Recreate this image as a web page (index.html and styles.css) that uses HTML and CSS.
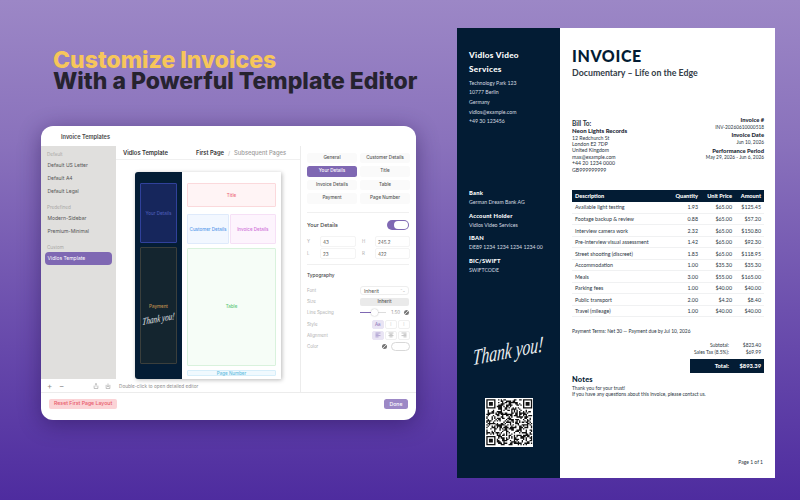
FILE: index.html
```html
<!DOCTYPE html>
<html>
<head>
    <meta charset="UTF-8">
    <meta name="viewport" content="width=device-width, initial-scale=1.0">
    <title>Customize Invoices</title>
    <link rel="stylesheet" href="styles.css">
</head>
<body>
    <div class="stage">
        <div class="promo">
            <h1 class="headline">
                <span class="headline-accent">Customize Invoices</span>
                <span class="headline-dark">With a Powerful Template Editor</span>
            </h1>

            <div class="window">
                <div class="titlebar">Invoice Templates</div>
                <div class="window-body">
                    <div class="sidebar-col">
                        <div class="sidebar">
                            <div class="side-group">Default</div>
                            <div class="side-item">Default US Letter</div>
                            <div class="side-item">Default A4</div>
                            <div class="side-item">Default Legal</div>
                            <div class="side-group">Predefined</div>
                            <div class="side-item">Modern-Sidebar</div>
                            <div class="side-item">Premium-Minimal</div>
                            <div class="side-group">Custom</div>
                            <div class="side-item selected">Vidlos Template</div>
                        </div>
                        <div class="side-tools">
                            <span class="tool-glyph">+</span>
                            <span class="tool-glyph">−</span>
                            <span class="tool-spacer"></span>
                            <svg class="tool-icon" viewBox="0 0 8 8"><path d="M1.5 3.5v3.8h5V3.5M4 5V.8M2.6 2 4 .7 5.4 2" fill="none" stroke="#8b8b8b" stroke-width=".7"/></svg>
                            <svg class="tool-icon" viewBox="0 0 8 8"><path d="M1.5 2.5v4.8h5V2.5M4 .7v4.2M2.6 3.7 4 5l1.4-1.3" fill="none" stroke="#8b8b8b" stroke-width=".7"/></svg>
                        </div>
                    </div>

                    <div class="center">
                        <div class="center-head">
                            <span class="template-name">Vidlos Template</span>
                            <span class="page-tab">First Page</span>
                            <span class="tab-sep">/</span>
                            <span class="page-tab muted">Subsequent Pages</span>
                        </div>
                        <div class="canvas">
                            <div class="mini-page">
                                <div class="mini-side">
                                    <div class="zone zone-your">Your Details</div>
                                    <div class="zone zone-payment">
                                        <span class="payment-label">Payment</span>
                                        <span class="mini-thanks">Thank you!</span>
                                    </div>
                                </div>
                                <div class="mini-main">
                                    <div class="zone zone-title">Title</div>
                                    <div class="zone-pair">
                                        <div class="zone zone-customer">Customer Details</div>
                                        <div class="zone zone-invoice">Invoice Details</div>
                                    </div>
                                    <div class="zone zone-table">Table</div>
                                    <div class="zone zone-number">Page Number</div>
                                </div>
                            </div>
                        </div>
                        <div class="hint">Double-click to open detailed editor</div>
                    </div>

                    <div class="panel">
                        <div class="section-grid">
                            <div class="sec-btn">General</div>
                            <div class="sec-btn">Customer Details</div>
                            <div class="sec-btn active">Your Details</div>
                            <div class="sec-btn">Title</div>
                            <div class="sec-btn">Invoice Details</div>
                            <div class="sec-btn">Table</div>
                            <div class="sec-btn">Payment</div>
                            <div class="sec-btn">Page Number</div>
                        </div>
                        <div class="panel-block">
                            <div class="details-head">
                                <span>Your Details</span>
                                <span class="toggle"><span class="toggle-knob"></span></span>
                            </div>
                            <div class="coords">
                                <span class="prop">Y</span><span class="coord">43</span>
                                <span class="prop">H</span><span class="coord">245.2</span>
                                <span class="prop">L</span><span class="coord">23</span>
                                <span class="prop">R</span><span class="coord">422</span>
                            </div>
                        </div>
                        <div class="panel-block typo">
                            <div class="typo-title">Typography</div>
                            <div class="typo-row">
                                <span class="prop">Font</span>
                                <span class="select">Inherit<span class="select-arrows">⌃⌄</span></span>
                            </div>
                            <div class="typo-row">
                                <span class="prop">Size</span>
                                <span class="size-box">Inherit</span>
                            </div>
                            <div class="typo-row">
                                <span class="prop">Line Spacing</span>
                                <span class="slider"><span class="slider-fill"></span><span class="slider-knob"></span></span>
                                <span class="spacing-val">1.50</span>
                                <span class="no-sign"></span>
                            </div>
                            <div class="typo-row">
                                <span class="prop">Style</span>
                                <span class="seg-group">
                                    <span class="seg on">Aa</span>
                                    <span class="seg faint">I</span>
                                    <span class="seg faint">I</span>
                                </span>
                            </div>
                            <div class="typo-row">
                                <span class="prop">Alignment</span>
                                <span class="seg-group">
                                    <span class="seg on"><svg viewBox="0 0 6 6"><path d="M.5 1h5M.5 2.3h3M.5 3.6h5M.5 4.9h3" stroke="#8d7bbd" stroke-width=".6"/></svg></span>
                                    <span class="seg"><svg viewBox="0 0 6 6"><path d="M.5 1h5M1.5 2.3h3M.5 3.6h5M1.5 4.9h3" stroke="#9a9a9a" stroke-width=".6"/></svg></span>
                                    <span class="seg"><svg viewBox="0 0 6 6"><path d="M.5 1h5M2.5 2.3h3M.5 3.6h5M2.5 4.9h3" stroke="#9a9a9a" stroke-width=".6"/></svg></span>
                                </span>
                            </div>
                            <div class="typo-row">
                                <span class="prop">Color</span>
                                <span class="color-wrap"><span class="no-sign"></span><span class="color-pill"></span></span>
                            </div>
                        </div>
                    </div>
                </div>
                <div class="window-foot">
                    <span class="btn-reset">Reset First Page Layout</span>
                    <span class="btn-done">Done</span>
                </div>
            </div>
        </div>

        <div class="invoice">
            <div class="inv-side">
                <div class="company">Vidlos Video Services</div>
                <div class="address">
                    <div>Technology Park 123</div>
                    <div>10777 Berlin</div>
                    <div>Germany</div>
                    <div>vidlos@example.com</div>
                    <div>+49 30 123456</div>
                </div>
                <div class="bank">
                    <div class="bank-label">Bank</div>
                    <div class="bank-val">German Dream Bank AG</div>
                    <div class="bank-label">Account Holder</div>
                    <div class="bank-val">Vidlos Video Services</div>
                    <div class="bank-label">IBAN</div>
                    <div class="bank-val">DE89 1234 1234 1234 1234 00</div>
                    <div class="bank-label">BIC/SWIFT</div>
                    <div class="bank-val">SWIFTCODE</div>
                </div>
                <div class="thanks">Thank you!</div>
                <svg class="qr" id="qr" viewBox="0 0 37 37"></svg>
            </div>

            <div class="inv-main">
                <div class="inv-title">INVOICE</div>
                <div class="inv-sub">Documentary – Life on the Edge</div>

                <div class="inv-meta">
                    <div class="bill">
                        <div class="bill-head">Bill To:</div>
                        <div class="bill-name">Neon Lights Records</div>
                        <div>12 Redchurch St</div>
                        <div>London E2 7DP</div>
                        <div>United Kingdom</div>
                        <div>max@example.com</div>
                        <div>+44 20 1234 0000</div>
                        <div>GB999999999</div>
                    </div>
                    <div class="meta-right">
                        <div class="meta-label">Invoice #</div>
                        <div>INV-20260610000518</div>
                        <div class="meta-label">Invoice Date</div>
                        <div>Jun 10, 2026</div>
                        <div class="meta-label">Performance Period</div>
                        <div>May 29, 2026 - Jun 6, 2026</div>
                    </div>
                </div>

                <table class="items">
                    <thead>
                        <tr><th>Description</th><th>Quantity</th><th>Unit Price</th><th>Amount</th></tr>
                    </thead>
                    <tbody>
                        <tr><td>Available light testing</td><td>1.93</td><td>$65.00</td><td>$125.45</td></tr>
                        <tr><td>Footage backup &amp; review</td><td>0.88</td><td>$65.00</td><td>$57.20</td></tr>
                        <tr><td>Interview camera work</td><td>2.32</td><td>$65.00</td><td>$150.80</td></tr>
                        <tr><td>Pre-interview visual assessment</td><td>1.42</td><td>$65.00</td><td>$92.30</td></tr>
                        <tr><td>Street shooting (discreet)</td><td>1.83</td><td>$65.00</td><td>$118.95</td></tr>
                        <tr><td>Accommodation</td><td>1.00</td><td>$35.30</td><td>$35.30</td></tr>
                        <tr><td>Meals</td><td>3.00</td><td>$55.00</td><td>$165.00</td></tr>
                        <tr><td>Parking fees</td><td>1.00</td><td>$40.00</td><td>$40.00</td></tr>
                        <tr><td>Public transport</td><td>2.00</td><td>$4.20</td><td>$8.40</td></tr>
                        <tr><td>Travel (mileage)</td><td>1.00</td><td>$40.00</td><td>$40.00</td></tr>
                    </tbody>
                </table>

                <div class="terms">Payment Terms: Net 30 — Payment due by Jul 10, 2026</div>

                <div class="sums">
                    <div class="sum-row"><span>Subtotal:</span><span class="sum-val">$823.40</span></div>
                    <div class="sum-row"><span>Sales Tax (8.5%):</span><span class="sum-val">$69.99</span></div>
                    <div class="sum-total"><span>Total:</span><span class="sum-val">$893.39</span></div>
                </div>

                <div class="notes-head">Notes</div>
                <div class="notes">
                    <div>Thank you for your trust!</div>
                    <div>If you have any questions about this invoice, please contact us.</div>
                </div>

                <div class="page-no">Page 1 of 1</div>
            </div>
        </div>
    </div>
    <script src="qr.js"></script>
</body>
</html>
```
FILE: styles.css
```css
* {
    box-sizing: border-box;
}

body {
    margin: 0;
    font-family: Inter, 'Liberation Sans', sans-serif;
}

.stage {
    display: flex;
    width: 800px;
    height: 500px;
    overflow: hidden;
    background: linear-gradient(180deg, #9c87c6 0%, #8a72bc 28%, #6d50ae 62%, #4e2c9f 100%);
}

.promo {
    width: 457px;
    padding: 49.5px 0 0 41px;
}

.headline {
    margin: 0 0 33.5px 12px;
    font-size: 23px;
    font-weight: 800;
    line-height: 21.5px;
    white-space: nowrap;
}

.headline span {
    display: block;
}

.headline-accent {
    color: #f6c65a;
}

.headline-dark {
    color: #26232f;
}

/* app window */
.window {
    width: 375px;
    height: 294px;
    background: white;
    border-radius: 12px;
    overflow: hidden;
    box-shadow: 0 4px 22px rgba(30, 10, 70, 0.45);
    color: #3c3c3c;
}

.titlebar {
    height: 20px;
    padding-left: 20px;
    font-size: 5.6px;
    font-weight: 600;
    line-height: 22px;
    color: #444;
}

.window-body {
    display: flex;
    height: 247px;
    border-bottom: 1px solid #ececec;
}

.sidebar-col {
    width: 75px;
    display: flex;
    flex-direction: column;
}

.sidebar {
    flex: 1;
    background: #e0dfdd;
    padding: 5px 4px 0 4px;
}

.side-group {
    font-size: 4.6px;
    line-height: 7.7px;
    color: #a9a8a6;
    padding-left: 2px;
    margin-top: 5.5px;
}

.side-group:first-child {
    margin-top: 0;
}

.side-item {
    font-size: 5px;
    line-height: 13.3px;
    color: #555;
    padding-left: 2.5px;
    border-radius: 4px;
}

.side-item.selected {
    background: #7f68b3;
    color: white;
    height: 13.5px;
}

.side-tools {
    height: 13px;
    display: flex;
    align-items: center;
    gap: 6px;
    padding: 0 5px 0 6px;
    color: #8b8b8b;
}

.tool-glyph {
    width: 6px;
    font-size: 8px;
    line-height: 8px;
}

.tool-spacer {
    flex: 1;
}

.tool-icon {
    width: 6px;
    height: 6px;
}

.center {
    width: 184px;
    display: flex;
    flex-direction: column;
}

.center-head {
    display: flex;
    align-items: center;
    height: 15px;
    padding-left: 7px;
    font-size: 5.8px;
    font-weight: 600;
    border-bottom: 1px solid #f0f0f0;
    white-space: nowrap;
    color: #333;
}

.template-name {
    width: 73px;
}

.tab-sep {
    margin: 0 4px;
    color: #bbb;
    font-weight: 400;
}

.page-tab.muted {
    color: #9a9a9a;
    font-weight: 500;
}

.canvas {
    flex: 1;
    padding: 12px 0 0 18.5px;
}

.mini-page {
    display: flex;
    width: 146.5px;
    height: 207px;
    background: white;
    border-radius: 3px 0 0 3px;
    box-shadow: 1px 1px 4px rgba(0, 0, 0, 0.28);
}

.mini-side {
    width: 47.5px;
    background: #041d35;
    border-radius: 3px 0 0 3px;
    padding: 11px 5px 0 5.5px;
}

.zone {
    display: flex;
    align-items: center;
    justify-content: center;
    font-size: 4.5px;
    font-weight: 500;
    border-radius: 1px;
    white-space: nowrap;
}

.zone-your {
    height: 60px;
    background: #16265c;
    border: 1px solid #30419b;
    color: #4a5bb5;
    margin-bottom: 3.5px;
}

.zone-payment {
    height: 117px;
    flex-direction: column;
    justify-content: flex-start;
    background: #14252f;
    border: 0.6px solid #3b3f3c;
    padding-top: 56px;
}

.payment-label {
    color: #c0914f;
}

.mini-thanks {
    margin-top: 4px;
    font-family: 'Liberation Serif', serif;
    font-style: italic;
    font-size: 10px;
    font-weight: 400;
    color: #e8ecef;
    transform: rotate(-10deg) skewX(-14deg) scale(0.72, 1);
}

.mini-main {
    flex: 1;
    padding: 11px 5px 0 5px;
}

.zone-title {
    height: 24px;
    margin-bottom: 7px;
    background: #fff4f5;
    border: 0.6px solid #fbd9dc;
    color: #ee6a78;
}

.zone-pair {
    display: flex;
    gap: 0.5px;
    height: 30px;
    margin-bottom: 3.5px;
}

.zone-customer {
    flex: 42;
    background: #f2f7ff;
    border: 0.6px solid #dfeafb;
    color: #5a9bea;
}

.zone-invoice {
    flex: 46.5;
    background: #fdf4fd;
    border: 0.6px solid #f6e0f6;
    color: #cf72d8;
}

.zone-table {
    height: 118px;
    margin-bottom: 4.5px;
    background: #f6fdf7;
    border: 0.6px solid #d9f2dd;
    color: #62c878;
}

.zone-number {
    height: 6px;
    background: #f0f9fe;
    border: 0.6px solid #d6eefa;
    color: #62bde0;
}

.hint {
    height: 13px;
    padding: 1px 0 0 3px;
    font-size: 4.7px;
    line-height: 13px;
    color: #8a8a8a;
}

.panel {
    width: 116px;
    padding: 6.5px 7px 0 6px;
    border-left: 1px solid #ececec;
}

.section-grid {
    display: grid;
    grid-template-columns: 50px 50px;
    gap: 3px 3px;
    padding-bottom: 8.5px;
}

.sec-btn {
    height: 10.5px;
    background: #fafafa;
    border-radius: 2.5px;
    font-size: 4.6px;
    line-height: 10.5px;
    text-align: center;
    color: #555;
    font-weight: 500;
    white-space: nowrap;
}

.sec-btn.active {
    background: #7f68b3;
    color: white;
}

.panel-block {
    border-top: 1px solid #f0f0f0;
}

.details-head {
    display: flex;
    align-items: center;
    justify-content: space-between;
    height: 22px;
    padding-top: 2px;
    font-size: 5.4px;
    font-weight: 500;
    color: #444;
}

.toggle {
    display: flex;
    justify-content: flex-end;
    width: 22.5px;
    height: 10.5px;
    padding: 1px;
    background: #7f68b3;
    border-radius: 6px;
}

.toggle-knob {
    width: 14px;
    height: 8.5px;
    background: white;
    border-radius: 5px;
}

.coords {
    display: grid;
    grid-template-columns: 13px 36px 19px 35px;
    grid-auto-rows: 12px;
    align-items: center;
    padding-bottom: 5px;
}

.coords .prop:nth-child(4n+3) {
    padding-left: 6px;
}

.prop {
    font-size: 4.4px;
    color: #b0b0b0;
    white-space: nowrap;
}

.coord {
    height: 11px;
    padding-left: 2px;
    font-size: 4.6px;
    line-height: 11px;
    color: #555;
    border: 0.5px solid #f4f4f4;
    border-radius: 2px;
}

.typo-title {
    height: 20px;
    padding-top: 7px;
    font-size: 4.8px;
    font-weight: 500;
    color: #444;
}

.typo-row {
    display: flex;
    align-items: center;
    height: 11.2px;
}

.typo-row .prop {
    width: 53px;
    flex-shrink: 0;
}

.select {
    display: flex;
    justify-content: space-between;
    align-items: center;
    width: 50px;
    height: 9px;
    padding: 0 3px;
    border: 0.5px solid #eee;
    border-radius: 3px;
    font-size: 5px;
    color: #555;
}

.select-arrows {
    font-size: 3px;
    color: #888;
}

.size-box {
    width: 50px;
    height: 8.5px;
    background: #eaeaea;
    border-radius: 2px;
    font-size: 4.6px;
    font-weight: 500;
    line-height: 8.5px;
    text-align: center;
    color: #555;
}

.slider {
    position: relative;
    width: 27px;
    height: 1px;
    background: #ddd;
}

.slider-fill {
    display: block;
    width: 12px;
    height: 1px;
    background: #7f68b3;
}

/* knob sits on top of the track */
.slider-knob {
    position: absolute;
    left: 11px;
    top: -3px;
    width: 7px;
    height: 7px;
    background: white;
    border-radius: 50%;
    box-shadow: 0 0 1.5px rgba(0, 0, 0, 0.35);
}

.spacing-val {
    width: 18px;
    padding-right: 4px;
    font-size: 4.6px;
    text-align: right;
    color: #999;
}

.no-sign {
    width: 5px;
    height: 5px;
    border-radius: 50%;
    background: linear-gradient(135deg, #777 44%, #ddd 44%, #ddd 56%, #777 56%);
}

.seg-group {
    display: flex;
    gap: 1.5px;
    margin-left: 12px;
}

.seg {
    display: flex;
    align-items: center;
    justify-content: center;
    width: 11.5px;
    height: 9px;
    border: 0.5px solid #f0f0f0;
    border-radius: 2px;
    font-size: 4.4px;
    color: #777;
}

.seg.on {
    background: #e9e4f4;
    border-color: #e9e4f4;
    color: #7f68b3;
}

.seg.faint {
    color: #ccc;
}

.seg svg {
    width: 6px;
    height: 6px;
}

.color-wrap {
    display: flex;
    align-items: center;
    gap: 4.5px;
    margin-left: 21.5px;
}

.color-pill {
    width: 19px;
    height: 9px;
    background: white;
    border: 0.7px solid #d8d8d8;
    border-radius: 5px;
}

.window-foot {
    display: flex;
    justify-content: space-between;
    align-items: center;
    height: 27px;
    padding: 0 8px 5.5px 8px;
}

.btn-reset {
    height: 9.5px;
    padding: 0 5px;
    background: #fbd3d6;
    border-radius: 2px;
    font-size: 5.2px;
    font-weight: 500;
    line-height: 9.5px;
    color: #e85a6a;
}

.btn-done {
    width: 24px;
    height: 10.5px;
    background: #9c88c6;
    border-radius: 2.5px;
    font-size: 5.2px;
    font-weight: 500;
    line-height: 10.5px;
    text-align: center;
    color: white;
}

/* invoice sheet */
.invoice {
    display: flex;
    width: 318px;
    height: 450px;
    margin-top: 28px;
    background: white;
    font-family: Lato, 'Liberation Sans', sans-serif;
    color: #2a3542;
}

.inv-side {
    width: 103px;
    background: #031c34;
    padding: 20px 8px 0 12px;
    color: #d7dce1;
    font-size: 5.2px;
}

.company {
    font-size: 8.2px;
    font-weight: 900;
    line-height: 14px;
    letter-spacing: 0.3px;
    color: white;
    width: 70px;
}

.address {
    margin-top: 2.5px;
    line-height: 9.7px;
}

.bank {
    margin-top: 61px;
}

.bank-label {
    font-size: 5.8px;
    font-weight: 900;
    line-height: 9px;
    letter-spacing: 0.2px;
    color: white;
}

.bank-val {
    line-height: 10px;
    margin-bottom: 3.7px;
}

.thanks {
    margin: 70px 0 0 4px;
    font-family: 'Liberation Serif', serif;
    font-style: italic;
    font-size: 22px;
    line-height: 26px;
    white-space: nowrap;
    color: #eef1f3;
    transform: rotate(-11deg) skewX(-14deg) scale(0.72, 1);
    transform-origin: left center;
}

.qr {
    display: block;
    width: 48.5px;
    height: 48.5px;
    margin: 27px 0 0 15.5px;
    background: white;
}

.inv-main {
    flex: 1;
    position: relative;
    padding: 19px 11px 0 12px;
    font-size: 4.9px;
    line-height: 6.4px;
}

.inv-title {
    font-size: 16px;
    font-weight: 900;
    line-height: 18px;
    letter-spacing: 0.6px;
    color: #031c34;
}

.inv-sub {
    margin-top: 2px;
    font-size: 8.8px;
    font-weight: 700;
    line-height: 11px;
    color: #333c47;
}

.inv-meta {
    display: flex;
    justify-content: space-between;
    margin-top: 37.5px;
}

.bill {
    padding-top: 3px;
    font-size: 5.2px;
}

.bill-head {
    font-size: 6.6px;
    font-weight: 700;
    line-height: 8px;
}

.bill-name {
    font-size: 6px;
    font-weight: 900;
    line-height: 8px;
    color: #1a2633;
}

.meta-right {
    margin-top: -1px;
    font-size: 4.8px;
    text-align: right;
}

.meta-label {
    margin-top: 2.5px;
    font-size: 5.8px;
    font-weight: 900;
    line-height: 6.5px;
    color: #1a2633;
}

.items {
    width: 192px;
    margin-top: 17px;
    border-collapse: collapse;
    table-layout: fixed;
}

.items th {
    height: 12px;
    padding: 0 3px;
    background: #031c34;
    color: white;
    font-size: 5.6px;
    font-weight: 900;
    text-align: right;
}

.items th:first-child,
.items td:first-child {
    width: 98px;
    text-align: left;
}

.items th:nth-child(2) {
    width: 31px;
}

.items th:nth-child(3) {
    width: 34px;
}

.items td {
    height: 11.5px;
    padding: 0 3px;
    font-size: 5.3px;
    line-height: 6px;
    text-align: right;
    border: 0.5px solid #f0f1f2;
    border-width: 0 0 0.5px 0;
    white-space: nowrap;
}

.terms {
    margin-top: 11px;
}

.sums {
    margin-top: 7.5px;
}

.sum-row {
    display: flex;
    justify-content: flex-end;
    line-height: 6.4px;
}

.sum-val {
    width: 32px;
    margin-right: 3px;
    text-align: right;
}

.sum-total {
    display: flex;
    justify-content: flex-end;
    align-items: center;
    width: 74px;
    height: 14px;
    margin: 4px 0 0 auto;
    background: #031c34;
    color: white;
    font-size: 5.8px;
    font-weight: 900;
}

.notes-head {
    margin-top: 2px;
    font-size: 7.4px;
    font-weight: 900;
    line-height: 9px;
    letter-spacing: 0.2px;
    color: #031c34;
}

.notes {
    margin-top: 0.5px;
}

/* stuck to the bottom of the sheet */
.page-no {
    position: absolute;
    right: 12px;
    bottom: 13px;
    font-size: 5px;
}
```
FILE: qr.js
```js
// fake qr code, just modules from a small seeded generator
var svg = document.getElementById('qr');
var size = 37;
var seed = 20260610;
var d = '';

function rnd() {
    seed = (seed * 1664525 + 1013904223) % 4294967296;
    return seed / 4294967296;
}

function inFinder(x, y, ox, oy) {
    return x >= ox && x < ox + 9 && y >= oy && y < oy + 9;
}

function finder(ox, oy) {
    d += 'M' + (ox + 1) + ' ' + (oy + 1) + 'h7v7h-7zM' + (ox + 2) + ' ' + (oy + 2) + 'v5h5v-5z';
    d += 'M' + (ox + 3) + ' ' + (oy + 3) + 'h3v3h-3z';
}

for (var y = 1; y < size - 1; y++) {
    for (var x = 1; x < size - 1; x++) {
        if (inFinder(x, y, 0, 0) || inFinder(x, y, size - 9, 0) || inFinder(x, y, 0, size - 9)) continue;
        if (rnd() > 0.5) d += 'M' + x + ' ' + y + 'h1v1h-1z';
    }
}

finder(0, 0);
finder(size - 9, 0);
finder(0, size - 9);

var path = document.createElementNS('http://www.w3.org/2000/svg', 'path');
path.setAttribute('d', d);
path.setAttribute('fill', '#111');
path.setAttribute('fill-rule', 'evenodd');
svg.appendChild(path);
```
